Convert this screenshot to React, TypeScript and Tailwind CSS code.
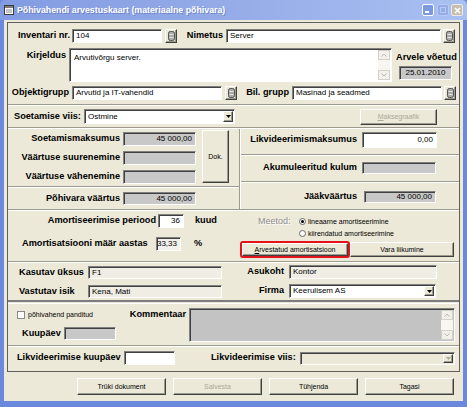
import React from "react";

const label = "font-bold text-[9.2px] leading-none text-black whitespace-nowrap";
const sunken =
  "flex items-center shrink-0 overflow-hidden whitespace-nowrap leading-none border border-t-[#808080] border-l-[#808080] border-b-white border-r-white shadow-[inset_1px_1px_0_#404040]";
const raised =
  "flex items-center justify-center shrink-0 bg-[#ece9d8] border border-t-white border-l-white border-b-[#404040] border-r-[#404040] shadow-[inset_-1px_-1px_0_#9d9a8e] leading-none whitespace-nowrap";

type P = { className?: string; children?: React.ReactNode };

function Field({ className = "", children }: P) {
  return (
    <div className={`${sunken} px-[3px] text-[8px] text-black ${className}`}>
      {children}
    </div>
  );
}

function HLine() {
  return <div className="h-[2px] shrink-0 border-t border-t-[#9d9a8e] border-b border-b-white" />;
}

function VLine() {
  return <div className="w-[2px] shrink-0 border-l border-l-[#9d9a8e] border-r border-r-white" />;
}

function Lookup({ className = "" }: P) {
  return (
    <div className={`${raised} w-[12px] h-[14px] ${className}`}>
      <svg width="7" height="10" viewBox="0 0 7 10">
        <rect x="0.5" y="0.5" width="6" height="9" rx="1.8" fill="#a9a9a9" stroke="#555" />
        <line x1="1.5" y1="3.5" x2="5.5" y2="3.5" stroke="#e4e4e4" />
        <line x1="1.5" y1="6.5" x2="5.5" y2="6.5" stroke="#e4e4e4" />
      </svg>
    </div>
  );
}

function DropBtn({ disabled }: { disabled?: boolean }) {
  return (
    <div className={`${raised} w-[10px] h-full`}>
      <svg width="5" height="3" viewBox="0 0 5 3">
        <path d="M0 0h5L2.5 3z" fill={disabled ? "#aca899" : "#000"} />
      </svg>
    </div>
  );
}

function Combo({ className = "", children, disabled }: P & { disabled?: boolean }) {
  return (
    <div className={`${sunken} ${className}`}>
      <span className="flex-1 pl-[3px] text-[8px] text-black">{children}</span>
      <div className="h-full py-[1px] pr-[1px]">
        <DropBtn disabled={disabled} />
      </div>
    </div>
  );
}

function ScrollBar() {
  return (
    <div className="w-[12px] h-full shrink-0 flex flex-col bg-[#f7f6f1]">
      <div className="h-[10px] border border-[#d3d1c6] bg-[#f1f0ea] flex items-center justify-center">
        <svg width="6" height="4" viewBox="0 0 6 4">
          <path d="M0.5 3.5L3 1l2.5 2.5" fill="none" stroke="#b9b9b9" />
        </svg>
      </div>
      <div className="flex-1" />
      <div className="h-[10px] border border-[#d3d1c6] bg-[#f1f0ea] flex items-center justify-center">
        <svg width="6" height="4" viewBox="0 0 6 4">
          <path d="M0.5 0.5L3 3l2.5-2.5" fill="none" stroke="#b9b9b9" />
        </svg>
      </div>
    </div>
  );
}

function Btn({ className = "", children, disabled }: P & { disabled?: boolean }) {
  return (
    <div className={`${raised} text-[7px] ${disabled ? "text-[#aca899]" : "text-black"} ${className}`}>
      {children}
    </div>
  );
}

function Radio({ on }: { on?: boolean }) {
  return (
    <div className="w-[7px] h-[7px] shrink-0 rounded-full bg-white border border-[#6a6a6a] flex items-center justify-center">
      {on && <div className="w-[3px] h-[3px] rounded-full bg-black" />}
    </div>
  );
}

function TitleBar() {
  return (
    <div className="h-[20px] shrink-0 flex items-center bg-gradient-to-r from-[#839be2] via-[#95ace8] to-[#a9c0f2] rounded-t-[5px]">
      <svg className="ml-[4px]" width="10" height="10" viewBox="0 0 10 10">
        <rect x="0.5" y="0.5" width="9" height="9" fill="#fff" stroke="#3b3b3b" />
        <rect x="1" y="1" width="8" height="2" fill="#7b7b7b" />
        <line x1="2" y1="5" x2="8" y2="5" stroke="#8c8c8c" />
        <line x1="2" y1="7" x2="8" y2="7" stroke="#8c8c8c" />
      </svg>
      <span className="ml-[3px] text-[8.8px] font-bold leading-none text-white [text-shadow:1px_1px_0_rgba(40,60,140,0.35)]">
        Põhivahendi arvestuskaart (materiaalne põhivara)
      </span>
      <div className="ml-auto w-[12px] h-[12px] rounded-[2px] border border-white bg-[#7d99e2] flex items-end pb-[2px] pl-[2px]">
        <div className="w-[4px] h-[2px] bg-white" />
      </div>
      <div className="ml-[3px] w-[12px] h-[12px] rounded-[2px] border border-[#b9c9f1] bg-[#94ace8] flex items-center justify-center">
        <div className="w-[6px] h-[6px] border border-[#b9c9f1]" />
      </div>
      <div className="ml-[2px] mr-[4px] w-[12px] h-[12px] rounded-[2px] border border-[#eeeae0] bg-[#c6bfb1] flex items-center justify-center">
        <svg width="7" height="7" viewBox="0 0 7 7">
          <path d="M1 1l5 5M6 1L1 6" stroke="#fff" strokeWidth="1.5" />
        </svg>
      </div>
    </div>
  );
}

export default function App() {
  return (
    <div className="w-[467px] h-[407px] bg-[#6b89dc] flex flex-col overflow-hidden font-['Liberation_Sans',Arial,sans-serif]">
      <TitleBar />
      <div className="flex-1 px-[4px] pb-[6px] flex">
        <div className="flex-1 bg-[#ece9d8] flex flex-col">
          {/* form box */}
          <div className="mt-[2px] ml-[3px] w-[453px] h-[350px] border border-[#5f5f5f] flex flex-col">
            {/* header fields */}
            <div className="h-[81px] shrink-0 flex flex-col">
              <div className="mt-[6px] h-[14px] flex items-center">
                <span className={`${label} w-[62px] text-right`}>Inventari nr.</span>
                <Field className="ml-[2px] w-[90px] h-[14px] bg-white">104</Field>
                <Lookup className="ml-[3px]" />
                <span className={`${label} w-[46px] text-right`}>Nimetus</span>
                <Field className="ml-[3px] w-[215px] h-[14px] bg-white">Server</Field>
                <Lookup className="ml-[2px]" />
              </div>
              <div className="mt-[5px] h-[34px] flex">
                <span className={`${label} w-[58px] text-right pt-[3px]`}>Kirjeldus</span>
                <div className={`${sunken} ml-[3px] w-[323px] h-[34px] bg-white items-stretch`}>
                  <span className="flex-1 pl-[4px] pt-[5px] text-[8px] text-black">Arvutivõrgu server.</span>
                  <div className="py-[1px] pr-[1px]">
                    <ScrollBar />
                  </div>
                </div>
                <div className="ml-[4px] flex flex-col">
                  <span className={`${label} mt-[5px]`}>Arvele võetud</span>
                  <Field className="ml-[3px] mt-[4px] w-[53px] h-[14px] bg-[#c8c8c8] justify-center">
                    25.01.2010
                  </Field>
                </div>
              </div>
              <div className="mt-[4px] h-[14px] flex items-center">
                <span className={`${label} w-[61px] text-right`}>Objektigrupp</span>
                <Field className="ml-[3px] w-[150px] h-[14px] bg-white">Arvutid ja IT-vahendid</Field>
                <Lookup className="ml-[3px]" />
                <span className={`${label} w-[52px] text-right`}>Bil. grupp</span>
                <Field className="ml-[3px] w-[150px] h-[14px] bg-white">Masinad ja seadmed</Field>
                <Lookup className="ml-[2px]" />
              </div>
            </div>
            <HLine />

            {/* soetamise viis */}
            <div className="h-[21px] shrink-0 flex items-center">
              <span className={`${label} ml-[6px] w-[70px]`}>Soetamise viis:</span>
              <Combo className="w-[151px] h-[15px] bg-white">Ostmine</Combo>
              <Btn disabled className="ml-[125px] w-[77px] h-[16px]">
                <span>
                  <span className="underline">M</span>aksegraafik
                </span>
              </Btn>
            </div>
            <HLine />

            {/* values */}
            <div className="h-[80px] shrink-0 flex">
              <div className="w-[231px] flex flex-col">
                <div className="h-[57px] flex">
                  <div className="flex flex-col">
                    <div className="mt-[3px] h-[14px] flex items-center">
                      <span className={`${label} w-[112px] text-right`}>Soetamismaksumus</span>
                      <Field className="ml-[3px] w-[73px] h-[14px] bg-[#c8c8c8] justify-end">45 000,00</Field>
                    </div>
                    <div className="mt-[5px] h-[14px] flex items-center">
                      <span className={`${label} w-[112px] text-right`}>Väärtuse suurenemine</span>
                      <Field className="ml-[3px] w-[73px] h-[14px] bg-[#c8c8c8]" />
                    </div>
                    <div className="mt-[5px] h-[14px] flex items-center">
                      <span className={`${label} w-[112px] text-right`}>Väärtuse vähenemine</span>
                      <Field className="ml-[3px] w-[73px] h-[14px] bg-[#c8c8c8]" />
                    </div>
                  </div>
                  <Btn className="ml-[6px] mt-[1px] w-[27px] h-[53px]">Dok.</Btn>
                </div>
                <HLine />
                <div className="mt-[4px] h-[13px] flex items-center">
                  <span className={`${label} w-[112px] text-right`}>Põhivara väärtus</span>
                  <Field className="ml-[3px] w-[73px] h-[13px] bg-[#c8c8c8] justify-end">45 000,00</Field>
                </div>
              </div>
              <VLine />
              <div className="flex-1 flex flex-col">
                <div className="h-[25px] shrink-0">
                  <div className="mt-[3px] h-[16px] flex items-center">
                    <span className={`${label} w-[116px] text-right`}>Likvideerimismaksumus</span>
                    <Field className="ml-[5px] w-[75px] h-[16px] bg-white justify-end">0,00</Field>
                  </div>
                </div>
                <HLine />
                <div className="h-[25px] shrink-0">
                  <div className="mt-[6px] h-[12px] flex items-center">
                    <span className={`${label} w-[116px] text-right`}>Akumuleeritud kulum</span>
                    <Field className="ml-[5px] w-[74px] h-[12px] bg-[#c8c8c8]" />
                  </div>
                </div>
                <HLine />
                <div className="flex-1">
                  <div className="mt-[8px] h-[12px] flex items-center">
                    <span className={`${label} w-[116px] text-right`}>Jääkväärtus</span>
                    <Field className="ml-[7px] w-[72px] h-[12px] bg-[#c8c8c8] justify-end">45 000,00</Field>
                  </div>
                </div>
              </div>
            </div>
            <HLine />

            {/* amortisatsioon */}
            <div className="h-[50px] shrink-0 flex">
              <div className="w-[232px] flex flex-col">
                <div className="mt-[3px] h-[14px] flex items-center">
                  <span className={`${label} w-[148px] text-right`}>Amortiseerimise periood</span>
                  <Field className="ml-[2px] w-[26px] h-[14px] bg-white justify-end">36</Field>
                  <span className={`${label} ml-[11px]`}>kuud</span>
                </div>
                <div className="mt-[9px] h-[14px] flex items-center">
                  <span className={`${label} ml-[14px] w-[134px]`}>Amortisatsiooni määr aastas</span>
                  <Field className="w-[25px] h-[14px] bg-[#f2f1ec] justify-end">33,33</Field>
                  <span className={`${label} ml-[13px]`}>%</span>
                </div>
              </div>
              <div className="flex-1 flex flex-col">
                <div className="mt-[6px] h-[9px] flex items-center">
                  <span className="ml-[18px] w-[41px] text-[9px] leading-none text-[#8d8d8d] [text-shadow:1px_1px_0_#fff] whitespace-nowrap">
                    Meetod:
                  </span>
                  <Radio on />
                  <span className="ml-[2px] text-[7px] leading-none text-black whitespace-nowrap">lineaarne amortiseerimine</span>
                </div>
                <div className="mt-[3px] h-[9px] flex items-center">
                  <div className="ml-[59px]">
                    <Radio />
                  </div>
                  <span className="ml-[2px] text-[7px] leading-none text-black whitespace-nowrap">kiirendatud amortiseerimine</span>
                </div>
                <div className="mt-[3px] h-[17px] flex">
                  <div className="w-[110px] h-[17px] border-2 border-[#e3131b] rounded-[3px] flex">
                    <Btn className="flex-1 h-full">
                      <span>
                        <span className="underline">A</span>rvestatud amortisatsioon
                      </span>
                    </Btn>
                  </div>
                  <Btn className="mt-[1px] w-[104px] h-[15px]">Vara liikumine</Btn>
                </div>
              </div>
            </div>
            <HLine />

            {/* kasutaja */}
            <div className="h-[37px] shrink-0 flex">
              <div className="w-[232px] flex flex-col">
                <div className="mt-[3px] h-[13px] flex items-center">
                  <span className={`${label} ml-[11px] w-[69px]`}>Kasutav üksus</span>
                  <Field className="w-[134px] h-[13px] bg-[#efede4]">F1</Field>
                </div>
                <div className="mt-[6px] h-[13px] flex items-center">
                  <span className={`${label} ml-[11px] w-[69px]`}>Vastutav isik</span>
                  <Field className="w-[134px] h-[13px] bg-[#efede4]">Kena, Mati</Field>
                </div>
              </div>
              <div className="flex-1 flex flex-col">
                <div className="mt-[2px] h-[14px] flex items-center">
                  <span className={`${label} w-[44px] text-right`}>Asukoht</span>
                  <Field className="ml-[5px] w-[148px] h-[14px] bg-[#efede4]">Kontor</Field>
                </div>
                <div className="mt-[5px] h-[14px] flex items-center">
                  <span className={`${label} w-[44px] text-right`}>Firma</span>
                  <Combo className="ml-[5px] w-[147px] h-[14px] bg-white">Keerulisem AS</Combo>
                </div>
              </div>
            </div>
            <div className="h-[4px] shrink-0 border-t-2 border-t-[#7c7c7c] border-b border-b-white" />

            {/* kommentaar */}
            <div className="h-[41px] shrink-0 flex">
              <div className="w-[181px] flex flex-col">
                <div className="mt-[6px] h-[9px] flex items-center">
                  <div className="ml-[9px] w-[8px] h-[8px] bg-white border border-[#8a8a8a]" />
                  <span className="ml-[3px] text-[7px] leading-none text-black whitespace-nowrap">põhivahend panditud</span>
                  <span className={`${label} ml-auto mr-[3px]`}>Kommentaar</span>
                </div>
                <div className="mt-[8px] h-[13px] flex items-center">
                  <span className={`${label} ml-[14px] w-[42px]`}>Kuupäev</span>
                  <Field className="w-[52px] h-[13px] bg-[#c8c8c8]" />
                </div>
              </div>
              <div className={`${sunken} mt-[4px] w-[266px] h-[34px] bg-[#c3c3c3] items-stretch justify-end`}>
                <div className="py-[1px] pr-[1px]">
                  <ScrollBar />
                </div>
              </div>
            </div>
            <HLine />

            {/* likvideerimine */}
            <div className="flex-1 flex flex-col">
              <div className="mt-[4px] h-[14px] flex items-center">
                <span className={`${label} ml-[9px] w-[107px]`}>Likvideerimise kuupäev</span>
                <Field className="w-[51px] h-[14px] bg-white" />
                <span className={`${label} ml-[36px] w-[89px]`}>Likvideerimise viis:</span>
                <Combo disabled className="w-[155px] h-[13px] bg-[#ece9d8]" />
              </div>
            </div>
          </div>

          {/* footer buttons */}
          <div className="mt-[6px] ml-[73px] flex gap-[7px]">
            <Btn className="w-[89px] h-[17px]">Trüki dokument</Btn>
            <Btn disabled className="w-[89px] h-[17px]">Salvesta</Btn>
            <Btn className="w-[89px] h-[17px]">Tühjenda</Btn>
            <Btn className="w-[89px] h-[17px]">Tagasi</Btn>
          </div>
        </div>
      </div>
    </div>
  );
}
